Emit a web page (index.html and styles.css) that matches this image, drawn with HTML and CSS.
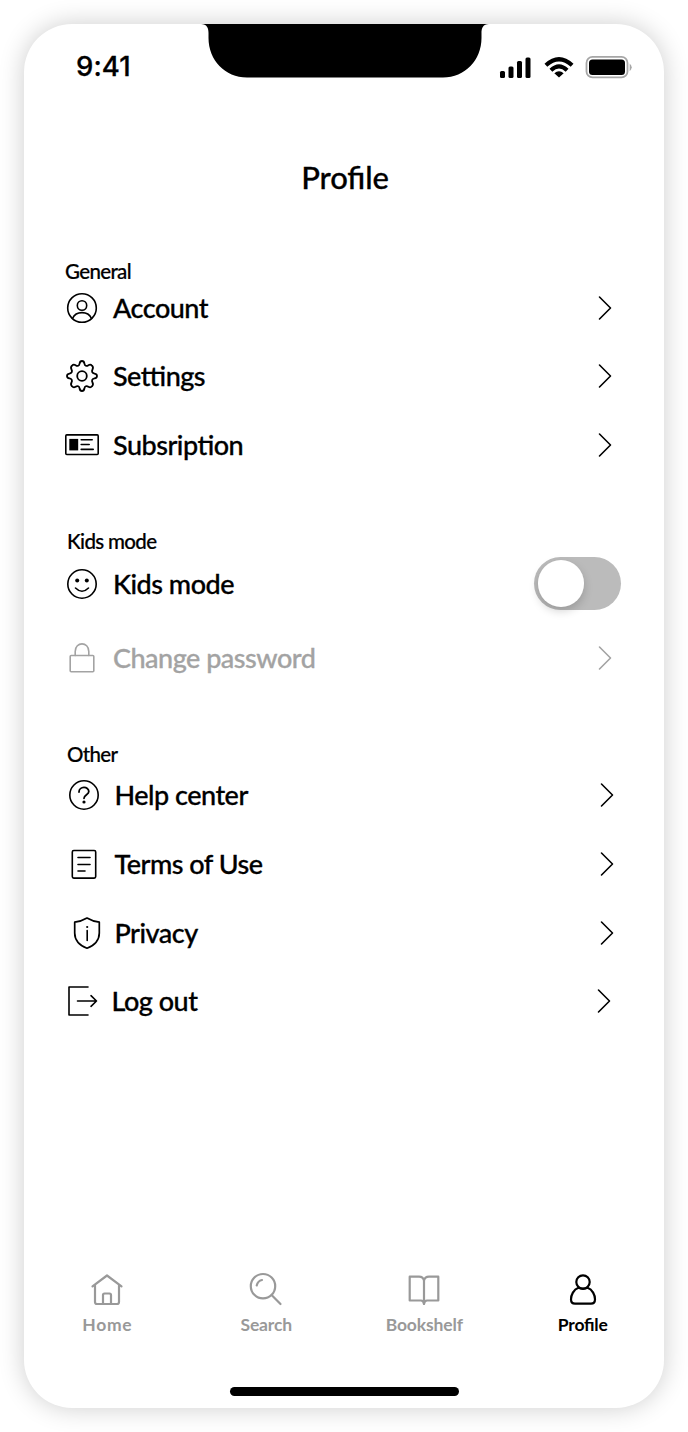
FILE: index.html
```html
<!DOCTYPE html>
<html lang="en">
<head>
<meta charset="utf-8">
<title>Profile</title>
<link rel="stylesheet" href="styles.css">
</head>
<body>
<svg width="0" height="0" class="defs"><symbol id="chev" viewBox="0 0 14 26"><path d="M1.500 2 12.500 13 1.500 24"/></symbol></svg>
<main class="phone">
  <header class="status">
    <span class="time">9:41</span>
    <svg class="notch" width="288" height="54" viewBox="0 0 288 54"><path d="M0 0H288C282 0 280.500 4 280.500 9V14C280.500 36 264 53.500 242 53.500H46C24 53.500 7.500 36 7.500 14V9C7.500 4 6 0 0 0Z"/></svg>
    <svg class="signals" width="134" height="26" viewBox="0 0 134 26">
      <rect x="1" y="15" width="5" height="7" rx="1.500"/><rect x="9.500" y="10.500" width="5" height="11.500" rx="1.500"/><rect x="18" y="5" width="5" height="17" rx="1.500"/><rect x="26.500" y="1.500" width="5" height="20.500" rx="1.500"/>
      <path d="M45.500 7.700Q60 -5.800 74.500 7.700L71.700 10.800Q60 .2 48.300 10.800ZM50.500 12.700Q60 3.700 69.500 12.700L66.700 15.700Q60 9.300 53.300 15.700ZM55.300 17.200Q60 13.200 64.700 17.200L60 21.500Z"/>
      <rect x="87.500" y=".9" width="41" height="20.500" rx="6" fill="none" stroke="#a6a6a6" stroke-width="1.800"/><rect x="90" y="3.400" width="36" height="15.600" rx="3.500"/><path d="M130.700 7.400Q134.700 11.300 130.700 15.200Z" fill="#a6a6a6"/>
    </svg>
  </header>
  <h1 class="title">Profile</h1>

  <section class="group general">
    <h2>General</h2>
    <div class="row"><svg class="icon" viewBox="0 0 36 36"><circle cx="18" cy="18" r="14.300"/><circle cx="18" cy="15.500" r="4.700"/><path d="M8.500 28.500C12 20.700 24 20.700 27.500 28.500"/></svg><span>Account</span><svg class="chev"><use href="#chev"/></svg></div>
    <div class="row"><svg class="icon" viewBox="0 0 36 36"><circle cx="18" cy="18" r="4.800" stroke-width="1.800"/><path stroke-width="1.800" d="M15.600 5.500Q16 3 18 3T20.400 5.500C20.700 7.900 22.500 8.500 24.400 7.200Q26.500 5.800 28 7.700Q29.700 9.400 28.500 11.500C27.400 13.500 28.200 15.200 30.500 15.600Q33 16 33 18T30.500 20.400C28.200 20.800 27.400 22.500 28.500 24.500Q29.700 26.600 28 28.300Q26.500 30.200 24.400 28.800C22.500 27.500 20.700 28.100 20.400 30.500Q20 33 18 33T15.600 30.500C15.300 28.100 13.500 27.500 11.600 28.800Q9.500 30.200 8 28.300Q6.300 26.600 7.500 24.500C8.600 22.500 7.800 20.800 5.500 20.400Q3 20 3 18T5.500 15.600C7.800 15.200 8.600 13.500 7.500 11.500Q6.300 9.400 8 7.700Q9.500 5.800 11.600 7.200C13.500 8.500 15.300 7.900 15.600 5.500Z"/></svg><span>Settings</span><svg class="chev"><use href="#chev"/></svg></div>
    <div class="row"><svg class="icon" viewBox="0 0 36 36"><rect x="1.800" y="7.900" width="32.400" height="19.600" rx="1"/><path d="M5.300 11.900h8.900v11.500H5.300z" fill="#000" stroke="none"/><path d="M17.200 12.700h11M17.200 17.500h8M17.200 22.400h12"/></svg><span>Subsription</span><svg class="chev"><use href="#chev"/></svg></div>
  </section>

  <section class="group kids">
    <h2>Kids mode</h2>
    <div class="row"><svg class="icon" viewBox="0 0 36 36"><circle cx="18" cy="18" r="14.200"/><circle cx="13.200" cy="14.500" r="2" class="solid"/><circle cx="22.800" cy="14.500" r="2" class="solid"/><path d="M11.500 22Q18 28.500 24.500 22"/></svg><span>Kids mode</span><div class="toggle"><i></i></div></div>
    <div class="row disabled"><svg class="icon" viewBox="0 0 36 36"><rect x="6.200" y="15.500" width="23.600" height="16.300" rx="1"/><path d="M11.200 15.500V11.500C11.200 1.300 24.800 1.300 24.800 11.500V15.500"/></svg><span>Change password</span><svg class="chev"><use href="#chev"/></svg></div>
  </section>

  <section class="group other">
    <h2>Other</h2>
    <div class="row"><svg class="icon" viewBox="0 0 36 36"><circle cx="18" cy="18" r="14.200"/><path stroke-width="1.800" d="M13 15C13 9 22.800 9 22.800 14.500C22.800 17.700 18 17.700 18 21.300"/><circle cx="18" cy="25" r="1.600" class="solid"/></svg><span>Help center</span><svg class="chev"><use href="#chev"/></svg></div>
    <div class="row"><svg class="icon" viewBox="0 0 36 36"><rect x="6.300" y="4.500" width="23.400" height="27.600" rx="1.500"/><path d="M12 11.500h12M12 18.500h12M12 25h7"/></svg><span>Terms of Use</span><svg class="chev"><use href="#chev"/></svg></div>
    <div class="row"><svg class="icon" viewBox="0 0 36 36"><path stroke-width="1.700" d="M21 3Q15 6.500 8.700 7.200V18C8.700 25.500 14 30.500 21 33.200C28 30.500 33.300 25.500 33.300 18V7.200Q27 6.500 21 3Z"/><path d="M21.200 15.500v10"/><circle cx="21.200" cy="12" r="1.100" class="solid"/></svg><span>Privacy</span><svg class="chev"><use href="#chev"/></svg></div>
    <div class="row logout"><svg class="icon" viewBox="0 0 36 36"><path d="M25 4H6V32H25M14.500 18H33.500M28 12.700 33.500 18 28 23.300"/></svg><span>Log out</span><svg class="chev"><use href="#chev"/></svg></div>
  </section>

  <nav class="tabs">
    <a class="home"><svg viewBox="0 0 36 36"><path d="M3.500 14.300 18 3.500 32.500 14.300M6 12.700V30Q6 32 8 32H28Q30 32 30 30V12.700M14 32V23Q14 21.500 15.500 21.500H20.500Q22 21.500 22 23V32"/></svg><span>Home</span></a>
    <a class="search"><svg viewBox="0 0 36 36"><circle cx="15" cy="14.200" r="12.200"/><path d="M23.800 23.200 32.500 32M8.700 13.500Q9.700 9 14 8"/></svg><span>Search</span></a>
    <a class="books"><svg viewBox="0 0 36 36"><path d="M3.700 4.700H13Q17.200 4.700 18 8.500Q18.800 4.700 23 4.700H32.300V28.500H21Q18.500 28.500 18 32Q17.500 28.500 15 28.500H3.700ZM18 8.500V32"/></svg><span>Bookshelf</span></a>
    <a class="active"><svg viewBox="0 0 36 36"><circle cx="18" cy="10" r="6.700"/><path d="M13.500 15.800C8.500 17.500 6 23 6 27.300Q6 31.700 10 31.700H26Q30 31.700 30 27.300C30 23 27.500 17.500 22.500 15.800C19.500 17.200 16.500 17.200 13.500 15.800"/></svg><span>Profile</span></a>
  </nav>
  <div class="indicator"></div>
</main>
</body>
</html>
```
FILE: styles.css
```css
* { box-sizing: border-box; margin: 0; padding: 0; }
body { background: #fff; font-family: Lato, "Liberation Sans", sans-serif; color: #000; padding: 24px; font-feature-settings: "liga" 1; }
.defs { position: absolute; }
.phone { width: 640px; height: 1384px; border-radius: 48px; background: #fff; box-shadow: 0 0 26px rgba(0,0,0,.2); display: flex; flex-direction: column; overflow: hidden; }
.status { height: 84px; display: flex; flex: none; padding-left: 52px; align-items: flex-start; }
.time { width: 125px; font: 500 27.500px/33px Inter, sans-serif; padding-top: 26px; letter-spacing: .1px; -webkit-text-stroke: .3px #000; }
.notch { flex: none; }
.signals { margin: 32px 0 0 10px; flex: none; }
.title { height: 90px; line-height: 90px; margin-top: 24px; padding-left: 2px; text-align: center; font-size: 31px; font-weight: 500; letter-spacing: -.1px; -webkit-text-stroke: .3px #000; flex: none; }
.group { margin-left: 40px; width: 550px; flex: none; }
.group h2 { font-size: 20.500px; line-height: 24px; height: 24px; font-weight: 500; letter-spacing: -.65px; padding-left: 1px; -webkit-text-stroke: .2px #000; }
.general h2, .other h2 { position: relative; top: -1px; }
.row { height: 68.300px; display: flex; align-items: center; position: relative; }
.row > span { font-size: 27px; line-height: 36px; font-weight: 500; letter-spacing: -.5px; -webkit-text-stroke: .3px currentColor; margin-left: 13px; white-space: nowrap; }
.icon { width: 36px; height: 36px; flex: none; overflow: visible; }
svg.icon, .tabs svg, .chev { fill: none; stroke: currentColor; stroke-width: 1.600; stroke-linecap: round; stroke-linejoin: round; }
.icon .solid { fill: currentColor; stroke: none; }
.chev { width: 14px; height: 26px; margin-left: auto; margin-right: 2px; }
.general { margin-top: 38px; }
.general .row:nth-of-type(1) { margin-top: -10px; }
.kids { margin-top: 50px; }
.kids h2, .other h2 { padding-left: 3px; }
.kids .row { height: 74px; }
.kids .row:nth-of-type(1) { margin-top: -6px; }
.disabled { color: #a3a3a3; }
.toggle { width: 87px; height: 53px; border-radius: 27px; background: #bbb; padding: 3px 3.500px; margin-left: auto; margin-right: -7px; flex: none; }
.toggle i { display: block; width: 46.500px; height: 46.500px; border-radius: 50%; background: #fff; box-shadow: 0 4px 10px rgba(0,0,0,.18); }
.other { margin-top: 48px; }
.other .row { left: 2px; height: 68.700px; }
.other .row:nth-of-type(1) { margin-top: -6px; }
.other .row > span { margin-left: 12.500px; }
.other .logout { left: -1px; }
.tabs { display: flex; margin: auto 2px 50.500px 4px; justify-content: space-between; }
.tabs a { width: 158.500px; display: flex; flex-direction: column; align-items: center; color: #999; }
.tabs svg { width: 36px; height: 36px; stroke-width: 2.200; }
.tabs span { font-size: 17.500px; line-height: 22px; font-weight: 700; margin-top: 6px; letter-spacing: .15px; }
.tabs .home span { letter-spacing: .65px; }
.tabs .search span { margin-left: 1px; letter-spacing: -.15px; }
.tabs .books span { letter-spacing: -.15px; }
.tabs .active span { letter-spacing: -.2px; }
.tabs .active { color: #000; }
.indicator { width: 229px; height: 9px; border-radius: 5px; background: #000; margin: 0 0 12.500px 206.400px; flex: none; }
```
